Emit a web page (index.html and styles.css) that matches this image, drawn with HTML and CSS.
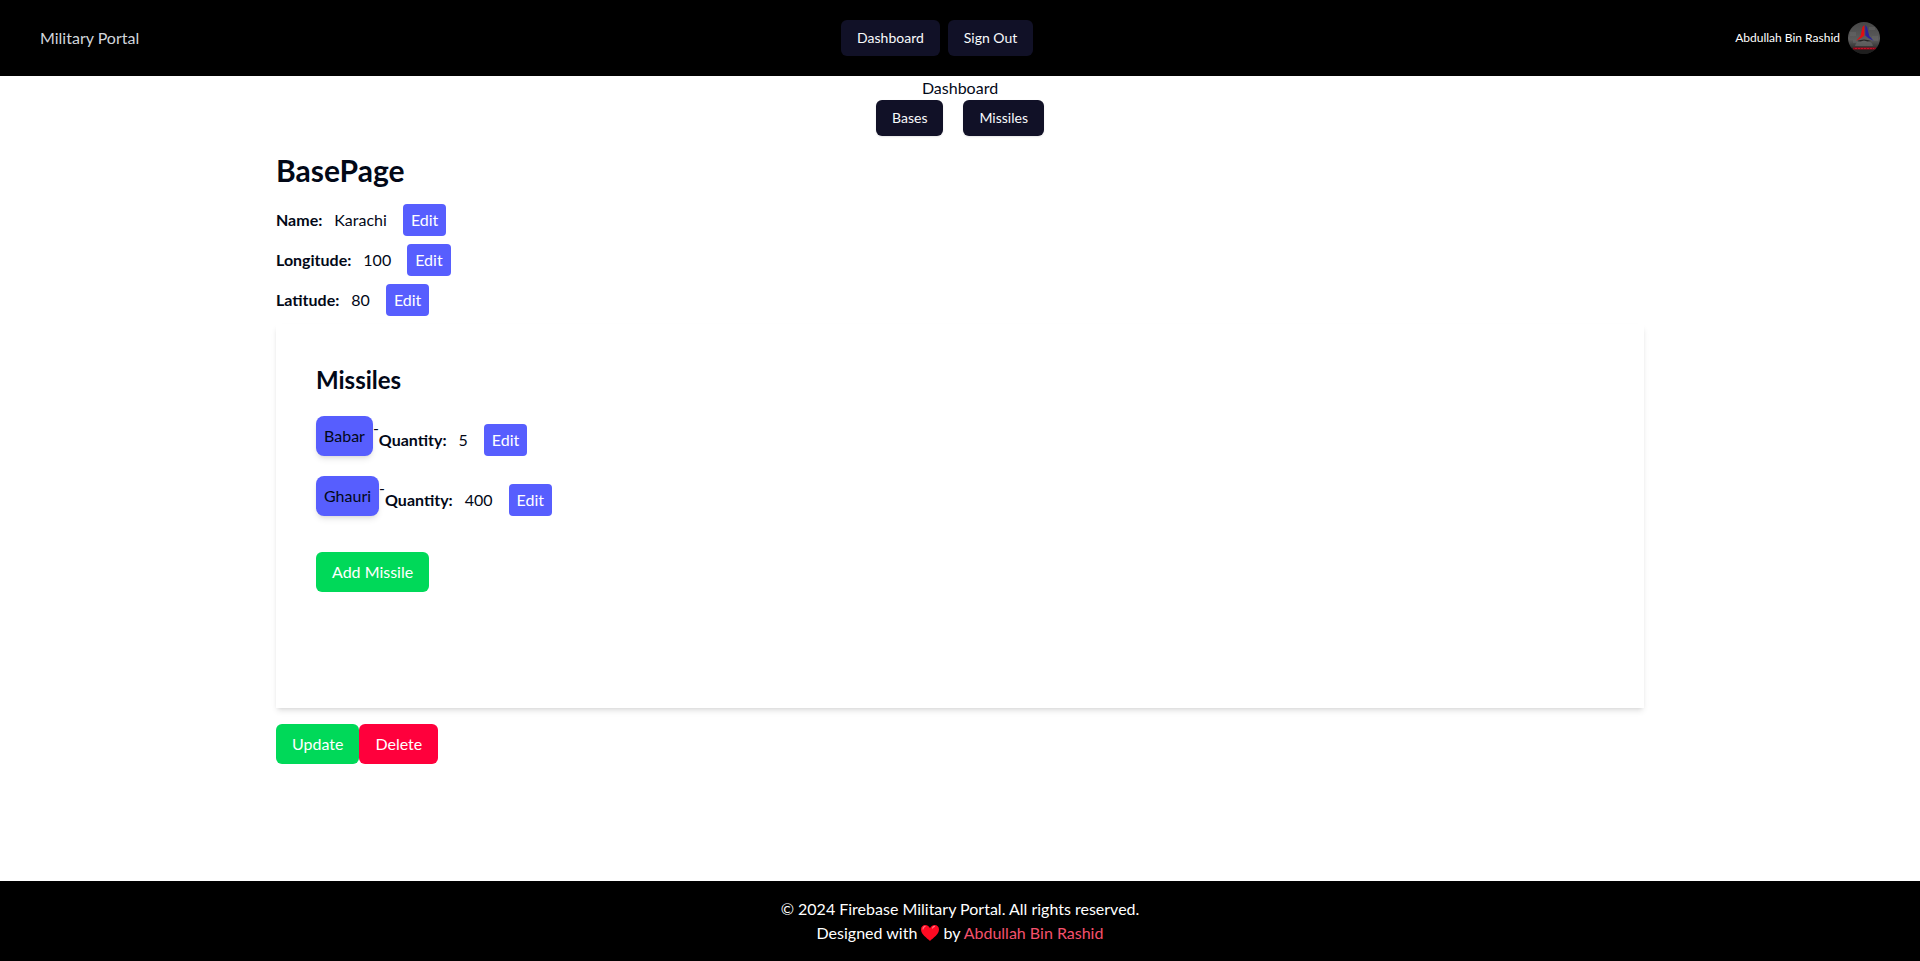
FILE: index.html
```html
<!DOCTYPE html>
<html lang="en">
<head>
<meta charset="utf-8">
<meta name="viewport" content="width=device-width, initial-scale=1">
<title>Military Portal</title>
<link rel="stylesheet" href="styles.css">
</head>
<body>
<header class="header">
  <p class="brand">Military Portal</p>
  <nav class="nav">
    <button type="button" class="nav-button">Dashboard</button>
    <button type="button" class="nav-button">Sign Out</button>
  </nav>
  <div class="user">
    <span class="user-name">Abdullah Bin Rashid</span>
    <svg class="avatar" viewBox="0 0 32 32" role="img" aria-label="Profile picture">
      <defs>
        <clipPath id="round"><circle cx="16" cy="16" r="16"/></clipPath>
        <linearGradient id="wall" x1="0" y1="0" x2="0" y2="1">
          <stop offset="0" stop-color="#464646"/>
          <stop offset=".55" stop-color="#5c5c5c"/>
          <stop offset=".8" stop-color="#333"/>
          <stop offset="1" stop-color="#1c1c1c"/>
        </linearGradient>
      </defs>
      <g clip-path="url(#round)">
        <rect width="32" height="32" fill="url(#wall)"/>
        <path d="M2 10h6v4H2zM21 5h6v3h-6zM24 14h6v5h-6zM5 18h5v3H5z" fill="#6a6a6a" opacity=".45"/>
        <path d="M7 24q1-5.500 9-5.500t9 5.500z" fill="#686868" opacity=".7"/>
        <path d="M9 19q7-3 14 0l-3.500 .5-3.500-1-3.500 1z" fill="#242424"/>
        <path d="M2 26h28v6H2z" fill="#1f1f1f"/>
        <path d="M16.300 3v10.500l-3 2.500L8 19l4.500-5L14.500 5z" fill="#e00d12"/>
        <path d="M17.300 3v10.500l3 2.500 5.500 3-4.500-5L19 5z" fill="#29219b"/>
        <path d="M5 26.500h23" stroke="#92081b" stroke-width="2"/>
        <path d="M7 26.500h19" stroke="#c21228" stroke-dasharray="2 1"/>
      </g>
    </svg>
  </div>
</header>
<main class="main">
  <section class="dashboard">
    <p class="dashboard-title">Dashboard</p>
    <div class="dashboard-links">
      <button type="button" class="nav-button">Bases</button>
      <button type="button" class="nav-button">Missiles</button>
    </div>
  </section>
  <section class="base">
    <h1 class="base-title">BasePage</h1>
    <div class="fields">
      <div class="field"><strong>Name:</strong><span class="value">Karachi</span><button type="button" class="edit">Edit</button></div>
      <div class="field"><strong>Longitude:</strong><span class="value">100</span><button type="button" class="edit">Edit</button></div>
      <div class="field"><strong>Latitude:</strong><span class="value">80</span><button type="button" class="edit">Edit</button></div>
    </div>
    <section class="card">
      <h2 class="card-title">Missiles</h2>
      <ul class="missiles">
        <li class="missile"><a href="#babar" class="chip">Babar</a><span>-</span><div class="field quantity"><strong>Quantity:</strong><span class="value">5</span><button type="button" class="edit">Edit</button></div></li>
        <li class="missile"><a href="#ghauri" class="chip">Ghauri</a><span>-</span><div class="field quantity"><strong>Quantity:</strong><span class="value">400</span><button type="button" class="edit">Edit</button></div></li>
      </ul>
      <button type="button" class="action confirm">Add Missile</button>
    </section>
    <div class="actions">
      <button type="button" class="action confirm">Update</button>
      <button type="button" class="action danger">Delete</button>
    </div>
  </section>
</main>
<footer class="footer">
  <p>© 2024 Firebase Military Portal. All rights reserved.</p>
  <p>Designed with <svg class="heart" viewBox="0 0 18 18" role="img" aria-label="love"><path d="M9 17C6 14 0 10.500 0 5.500 0 2.500 2 1 4.300 1 6.500 1 8.200 2.400 9 4.300 9.800 2.400 11.500 1 13.700 1 16 1 18 2.500 18 5.500 18 10.500 12 14 9 17z" fill="#ff0a22"/><path d="M2 5q0-2 2-2.600M11.500 4q.8-1.400 2-1.600" fill="none" stroke="#ff7583" stroke-width="1.200" stroke-linecap="round"/></svg> by <a href="#author" class="author">Abdullah Bin Rashid</a></p>
</footer>
</body>
</html>
```
FILE: styles.css
```css
*, *::before, *::after { box-sizing: border-box; }
body {
  margin: 0;
  min-height: 100vh;
  display: flex;
  flex-direction: column;
  background: #fff;
  color: #020817;
  font-family: Lato, "Noto Sans", sans-serif;
  font-size: 16px;
  line-height: 24px;
}
p, h1, h2, ul { margin: 0; padding: 0; }
button { border: 0; font: inherit; cursor: pointer; }
a { color: inherit; text-decoration: none; }
strong { font-weight: 700; }

.header {
  display: flex;
  align-items: center;
  justify-content: space-between;
  padding: 20px 40px;
  background: #000;
  color: #fff;
}
.brand { color: #d1d5db; }
.nav { display: flex; gap: 8px; }
.nav-button {
  padding: 8px 16px;
  border-radius: 6px;
  background: #111127;
  color: #f8fafc;
  font-size: 14px;
  line-height: 20px;
  box-shadow: 0 1px 2px rgba(0, 0, 0, .1);
}
.user { display: flex; align-items: center; gap: 8px; }
.user-name { font-size: 12px; line-height: 16px; }
.avatar { width: 32px; height: 32px; }

.main { flex: 1; }
.dashboard { text-align: center; }
.dashboard-links { display: flex; justify-content: center; gap: 20px; }
.base { width: 71.25%; margin: 16px auto 0; }
.base-title { font-size: 30px; line-height: 36px; font-weight: 700; }
.fields { display: flex; flex-direction: column; gap: 8px; margin-top: 16px; }
.field { display: flex; align-items: center; }
.value { padding: 0 16px 0 12px; }
.edit {
  padding: 4px 8px;
  border-radius: 4px;
  background: #575efe;
  color: #fff;
}
.card {
  min-height: 384px;
  margin-top: 8px;
  padding: 40px;
  background: #fff;
  box-shadow: 0 4px 6px -1px rgba(0, 0, 0, .1), 0 2px 4px -2px rgba(0, 0, 0, .1);
}
.card-title { font-size: 24px; line-height: 32px; font-weight: 700; }
.missiles {
  display: flex;
  flex-direction: column;
  gap: 20px;
  margin: 20px 0 36px;
  list-style: none;
}
.missile { display: flex; align-items: flex-start; }
.chip {
  padding: 8px;
  border-radius: 8px;
  background: #575efe;
  box-shadow: 0 4px 6px -1px rgba(0, 0, 0, .1), 0 2px 4px -2px rgba(0, 0, 0, .1);
}
.quantity { margin-top: 8px; }
.actions { display: flex; margin-top: 16px; }
.action { padding: 8px 16px; border-radius: 6px; color: #fff; }
.confirm { background: #00d959; }
.danger { background: #ff003c; }

.footer {
  padding: 16px;
  background: #000;
  color: #fff;
  text-align: center;
}
.heart { width: 18px; height: 18px; vertical-align: -3px; }
.author { color: #f4516c; }
```
